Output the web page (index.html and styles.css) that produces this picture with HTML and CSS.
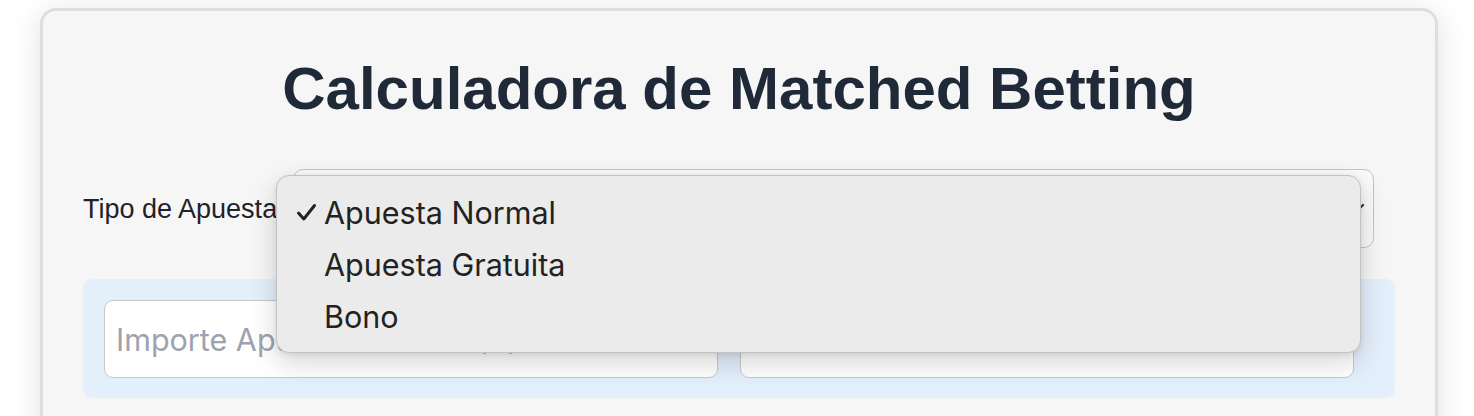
FILE: index.html
```html
<!DOCTYPE html>
<html lang="es">
<head>
<meta charset="utf-8">
<title>Calculadora de Matched Betting</title>
<link rel="stylesheet" href="styles.css">
</head>
<body>
<div class="card">
  <h1 class="title">Calculadora de Matched Betting</h1>
  <div class="type-row">
    <label class="type-label">Tipo de Apuesta:</label>
    <div class="select">
      <span class="select-value">Apuesta Normal</span>
      <svg class="chevron" width="20" height="12" viewBox="0 0 20 12"><path d="M2 2 L10 10 L18 2" fill="none" stroke="#3a3a44" stroke-width="2.4" stroke-linecap="round" stroke-linejoin="round"/></svg>
    </div>
    <div class="menu">
      <div class="menu-item checked">
        <svg class="check" width="21" height="19" viewBox="0 0 21 19"><path d="M2.5 10 L7.8 16 L18.5 2.5" fill="none" stroke="#222" stroke-width="3" stroke-linecap="round" stroke-linejoin="round"/></svg>
        <span>Apuesta Normal</span>
      </div>
      <div class="menu-item"><span>Apuesta Gratuita</span></div>
      <div class="menu-item"><span>Bono</span></div>
    </div>
  </div>
  <div class="panel">
    <div class="field">Importe Apuesta Normal (€)</div>
    <div class="field"></div>
  </div>
</div>
</body>
</html>
```

FILE: styles.css
```css
html, body {
  margin: 0;
  padding: 0;
  background: #ffffff;
}

body {
  width: 1474px;
  height: 416px;
  overflow: hidden;
  font-family: "Liberation Sans", Arial, sans-serif;
}

.card {
  box-sizing: border-box;
  width: 1398px;
  margin: 8px 0 0 40px;
  padding: 42px 40px 40px;
  background: #f6f6f6;
  border: 3px solid #dedede;
  border-radius: 16px;
  box-shadow: 0 4px 30px rgba(0, 0, 0, 0.12);
  min-height: 500px;
}

.title {
  margin: 0;
  font-size: 60px;
  line-height: 72px;
  font-weight: 700;
  color: #1f2937;
  text-align: center;
}

.type-row {
  position: relative;
  display: flex;
  align-items: center;
  margin-top: 44px;
}

.type-label {
  flex: none;
  width: 210px;
  font-size: 27px;
  color: #1f2229;
  padding-top: 2px;
}

.select {
  box-sizing: border-box;
  width: 1081px;
  height: 79px;
  display: flex;
  align-items: center;
  justify-content: space-between;
  padding: 0 8px 0 16px;
  background: #f9f9f9;
  border: 1.5px solid #c4c4c4;
  border-radius: 10px;
  font-family: "Inter", "Noto Sans", sans-serif;
  font-size: 30px;
  color: #222;
}

.chevron {
  display: block;
}

.menu {
  position: absolute;
  left: 193px;
  top: 6px;
  box-sizing: border-box;
  width: 1085px;
  height: 178px;
  padding: 10px 0 12px;
  background: #ebebeb;
  border: 1.5px solid #c2c2c2;
  border-radius: 13px;
  box-shadow: 0 10px 28px rgba(0, 0, 0, 0.16), 0 2px 6px rgba(0, 0, 0, 0.08);
  font-family: "Inter", "Noto Sans", sans-serif;
  font-size: 30.5px;
  color: #222222;
}

.menu-item {
  position: relative;
  height: 52px;
  display: flex;
  align-items: center;
  padding-left: 47px;
}

.check {
  position: absolute;
  left: 19px;
  top: 17px;
}

.panel {
  display: grid;
  grid-template-columns: 614px 614px;
  column-gap: 22px;
  margin-top: 31px;
  padding: 21px 41px 20px 21px;
  background: #e3effb;
  border-radius: 9px;
}

.field {
  box-sizing: border-box;
  height: 78px;
  display: flex;
  align-items: center;
  padding-left: 11px;
  background: #ffffff;
  border: 1.5px solid #c9c9c9;
  border-radius: 9px;
  font-family: "Inter", "Noto Sans", sans-serif;
  font-size: 30.5px;
  color: #9ca3af;
}
```
